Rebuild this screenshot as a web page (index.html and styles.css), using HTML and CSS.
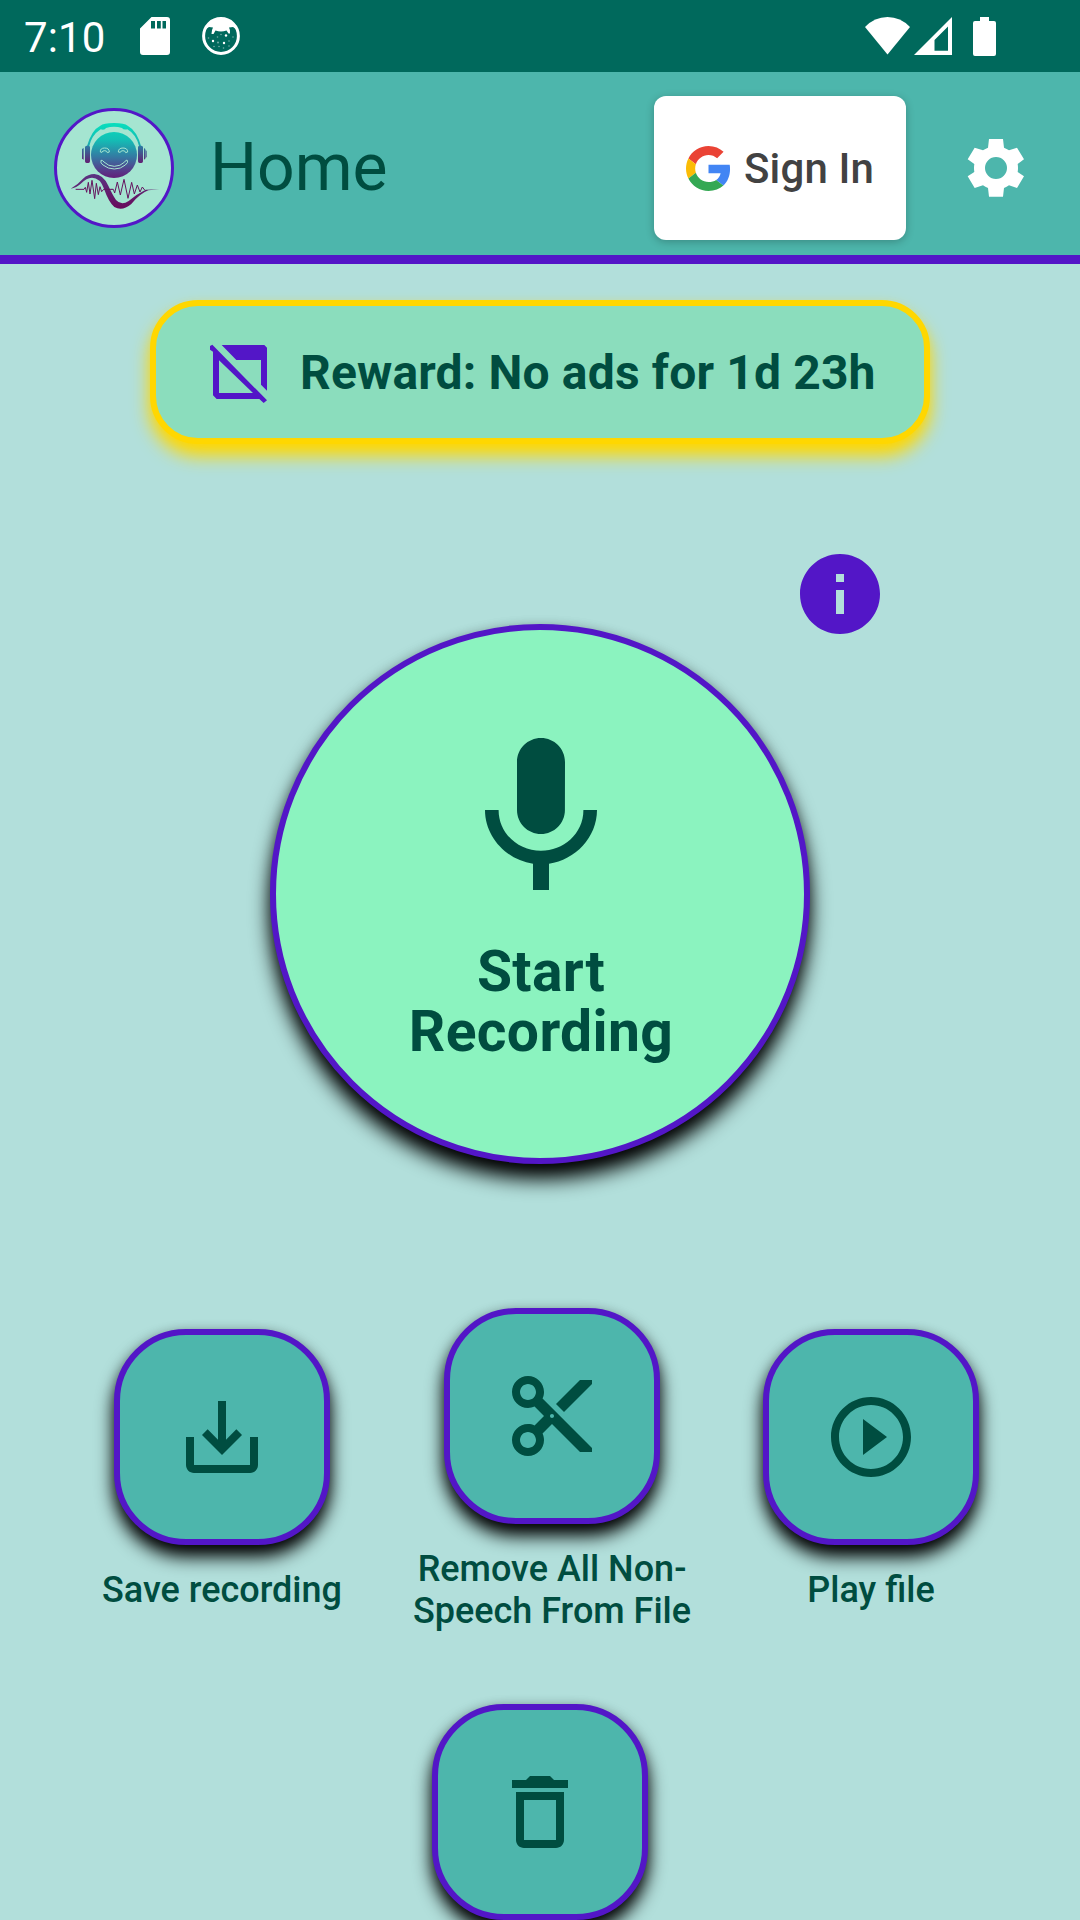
FILE: index.html
```html
<!DOCTYPE html>
<html lang="en">
<head>
<meta charset="utf-8">
<title>Home</title>
<link rel="stylesheet" href="styles.css">
</head>
<body>
<div class="screen">
  <div class="status-bar">
    <span class="clock">7:10</span>
    <svg class="sd-icon" viewBox="0 0 30 38"><path fill="#fff" fill-rule="evenodd" d="M11.500 0H27a3 3 0 0 1 3 3v32a3 3 0 0 1-3 3H3a3 3 0 0 1-3-3V11.500zM11 4v7.500h4V4zM17 4v7.500h3.800V4zM22.500 4v7.500H26V4z"/></svg>
    <svg class="app-icon" viewBox="0 0 38 38">
      <circle cx="19" cy="19" r="17.400" fill="none" stroke="#fff" stroke-width="3"/>
      <path fill="#fff" d="M4 12Q8 2 19 2T34 12L31 10L27 10.500Q28.500 13 28 16.500H26.500L24.500 13.500Q19 15.500 13.500 13.500L11.500 17H9.500Q9.500 13 11 10.500L7 10z"/>
      <g fill="#fff"><circle cx="11" cy="24" r="1.200"/><circle cx="22" cy="26" r="1.200"/><circle cx="24" cy="18.500" r="1.200"/></g>
      <g fill="#fff" opacity=".45"><circle cx="15.500" cy="20" r=".8"/><circle cx="19" cy="17.500" r=".8"/><circle cx="16" cy="25.500" r="1"/><circle cx="27" cy="24" r=".8"/><circle cx="12" cy="29.500" r=".8"/><circle cx="17" cy="29.500" r=".8"/><circle cx="21.500" cy="31" r=".8"/><circle cx="31" cy="20" r=".8"/><circle cx="27" cy="29" r=".8"/><circle cx="6.500" cy="21" r=".8"/></g>
    </svg>
    <div class="status-right">
      <svg class="wifi-icon" viewBox="0 0 45 38"><path fill="#fff" d="M22.500 37.500L0 10Q9.500 0 22.500 0T45 10z"/></svg>
      <svg class="signal-icon" viewBox="0 0 38 38"><path fill="#fff" fill-rule="evenodd" d="M38 0v38H0zM34 9.500L20.500 23v10.700H34z"/></svg>
      <svg class="battery-icon" viewBox="0 0 23 39"><path fill="#fff" d="M7 0h9v4h5a2 2 0 0 1 2 2v31a2 2 0 0 1-2 2H2a2 2 0 0 1-2-2V6a2 2 0 0 1 2-2h5z"/></svg>
    </div>
  </div>

  <header class="header">
    <svg class="logo" viewBox="42 39 360 360">
      <defs>
        <linearGradient id="face" x1="0" y1="84" x2="0" y2="250" gradientUnits="userSpaceOnUse">
          <stop offset="0" stop-color="#08dfbd"/><stop offset=".3" stop-color="#13bfb5"/><stop offset=".62" stop-color="#3578a2"/><stop offset=".85" stop-color="#553c8b"/><stop offset="1" stop-color="#631d78"/>
        </linearGradient>
        <linearGradient id="cups" x1="0" y1="150" x2="0" y2="206" gradientUnits="userSpaceOnUse">
          <stop offset="0" stop-color="#2a80a5"/><stop offset="1" stop-color="#641b70"/>
        </linearGradient>
        <linearGradient id="wave" x1="0" y1="235" x2="0" y2="342" gradientUnits="userSpaceOnUse">
          <stop offset="0" stop-color="#5a3583"/><stop offset="1" stop-color="#680a5b"/>
        </linearGradient>
      </defs>
      <circle cx="222" cy="219" r="175.500" fill="#a5e5d1" stroke="#5316c7" stroke-width="9"/>
      <path fill="url(#face)" d="M140 156Q154 105 181 92Q190 84 222 84T263 92Q291 107 304 156L298 156Q289 118 262 103Q250 105 246 99Q222 91 198 99Q195 106 182 103Q154 121 147 156z"/>
      <path fill="url(#cups)" d="M140 152h6q4 0 4 5v42q0 5-5 5h-5q-5 0-5-5v-42q0-5 5-5zM126 162l5-3v35l-5-3zM298 152h6q5 0 5 5v42q0 5-5 5h-5q-5 0-5-5v-42q0-5 4-5zM312 159l4 3v29l-4 3zM317 165l3 3v18l-3 3z"/>
      <circle cx="222" cy="180" r="69" fill="url(#face)"/>
      <g fill="none" stroke="#a5e5d1" stroke-width="3">
        <path d="M181 171q-1-12 13-12t14 12l-6 2q-1-6-8-6t-8 5zM235 171q0-12 14-12t14 12l-6 2q-1-6-8-6t-8 5z"/>
        <path d="M183 196q-3 8 6 14q15 12 34 12t33-12q10-8 6-14q-4-3-8 5q-13 13-31 13t-31-13q-5-7-9-5z"/>
      </g>
      <path fill="url(#wave)" d="M92 281Q112 270 129 251Q144 237 163 237Q190 239 205 272Q218 300 228 315Q244 333 266 318Q292 296 317 284L358 283L325 286Q299 296 274 327Q247 350 223 336Q206 321 192 281Q180 248 156 248Q139 249 124 265Q109 279 92 281z"/>
      <g fill="none" stroke="#65145f" stroke-width="3" stroke-linejoin="round">
        <path d="M107 283h25l4-6 4 15 5-30 5 35 6-41 8 55 5-46 6 34 5-24 5 15 6-7h26"/>
        <path d="M215 283h5l4 11 8-33 9 39 11-47 12 57 11-48 8 35 9-27 8 21 7-15 7 9"/>
      </g>
    </svg>
    <h1 class="title">Home</h1>
    <button class="sign-in">
      <svg class="google-icon" viewBox="0 0 48 48">
        <path fill="#ea4335" d="M24 9.500c3.540 0 6.710 1.220 9.210 3.600l6.850-6.850C35.900 2.380 30.470 0 24 0 14.620 0 6.510 5.380 2.560 13.220l7.980 6.190C12.430 13.720 17.740 9.500 24 9.500z"/>
        <path fill="#4285f4" d="M46.980 24.550c0-1.570-.15-3.090-.38-4.550H24v9.020h12.940c-.58 2.960-2.260 5.480-4.780 7.180l7.730 6c4.510-4.180 7.090-10.360 7.090-17.650z"/>
        <path fill="#fbbc05" d="M10.530 28.590c-.48-1.450-.76-2.990-.76-4.590s.27-3.140.76-4.590l-7.980-6.190C.92 16.460 0 20.120 0 24c0 3.880.92 7.540 2.560 10.780l7.970-6.190z"/>
        <path fill="#34a853" d="M24 48c6.480 0 11.930-2.130 15.890-5.810l-7.730-6c-2.150 1.450-4.920 2.300-8.160 2.300-6.260 0-11.570-4.220-13.470-9.910l-7.980 6.190C6.510 42.620 14.620 48 24 48z"/>
      </svg>
      <span>Sign In</span>
    </button>
    <svg class="gear" viewBox="0 0 216 228"><path fill="#fff" fill-rule="evenodd" d="M87 27H129L132 53Q140 56 147 61L171 53L192 88L173 102Q175 114 173 126L192 139L171 174L147 166Q140 171 132 174L129 200H87L84 174Q76 171 69 166L44 174L23 139L43 126Q41 114 43 102L23 88L44 53L69 61Q76 56 84 53zM108 81a33 33 0 1 0 0 66a33 33 0 1 0 0-66z"/></svg>
  </header>

  <main class="content">
    <div class="reward">
      <svg class="no-ads" viewBox="237 192 177 180">
        <path fill="#5316c7" d="M275 195H403L411 203V332L393 314V240H319zM240 198L247 194L411 361L401 369L388 357H260L249 346V215L240 209zM267 241V339H369z"/>
      </svg>
      <span>Reward: No ads for 1d 23h</span>
    </div>

    <svg class="info" viewBox="0 0 24 24"><path fill="#5316c7" d="M12 2C6.480 2 2 6.480 2 12s4.480 10 10 10 10-4.480 10-10S17.520 2 12 2zm1 15h-2v-6h2v6zm0-8h-2V7h2v2z"/></svg>

    <button class="record">
      <svg class="mic" viewBox="0 0 24 24"><path fill="#004d40" d="M12 14c1.660 0 2.990-1.340 2.990-3L15 5c0-1.660-1.340-3-3-3S9 3.340 9 5v6c0 1.660 1.340 3 3 3zm5.300-3c0 3-2.540 5.100-5.300 5.100S6.700 14 6.700 11H5c0 3.410 2.720 6.230 6 6.720V21h2v-3.280c3.280-.48 6-3.300 6-6.720h-1.700z"/></svg>
      <span class="record-label">Start<br>Recording</span>
    </button>

    <div class="actions">
      <div class="action">
        <button class="tile"><svg class="icon" viewBox="0 0 24 24"><path d="M19 12v7H5v-7H3v7c0 1.100.9 2 2 2h14c1.100 0 2-.9 2-2v-7h-2zm-6 .67l2.590-2.580L17 11.500l-5 5-5-5 1.410-1.410L11 12.670V3h2z"/></svg></button>
        <span class="label">Save recording</span>
      </div>
      <div class="action">
        <button class="tile"><svg class="icon" viewBox="0 0 24 24"><path d="M9.640 7.640c.23-.5.360-1.050.360-1.640 0-2.210-1.790-4-4-4S2 3.790 2 6s1.790 4 4 4c.59 0 1.140-.13 1.640-.36L10 12l-2.360 2.360C7.140 14.130 6.590 14 6 14c-2.210 0-4 1.790-4 4s1.790 4 4 4 4-1.790 4-4c0-.59-.13-1.140-.36-1.640L12 14l7 7h3v-1L9.640 7.640zM6 8c-1.100 0-2-.89-2-2s.9-2 2-2 2 .89 2 2-.9 2-2 2zm0 12c-1.100 0-2-.89-2-2s.9-2 2-2 2 .89 2 2-.9 2-2 2zm6-7.500c-.28 0-.5-.22-.5-.5s.22-.5.500-.5.500.22.500.500-.22.500-.5.500zM19 3l-6 6 2 2 7-7V3z"/></svg></button>
        <span class="label">Remove All Non-<br>Speech From File</span>
      </div>
      <div class="action">
        <button class="tile"><svg class="icon" viewBox="0 0 24 24"><path d="M10 16.500l6-4.500-6-4.500v9zM12 2C6.480 2 2 6.480 2 12s4.480 10 10 10 10-4.480 10-10S17.520 2 12 2zm0 18c-4.410 0-8-3.590-8-8s3.590-8 8-8 8 3.590 8 8-3.590 8-8 8z"/></svg></button>
        <span class="label">Play file</span>
      </div>
    </div>

    <button class="tile delete"><svg class="icon" viewBox="0 0 24 24"><path fill-rule="evenodd" d="M6 19c0 1.100.9 2 2 2h8c1.100 0 2-.9 2-2V7H6v12zM8 9h8v10H8V9zm7.500-5l-1-1h-5l-1 1H5v2h14V4h-3.500z"/></svg></button>
  </main>
</div>
</body>
</html>
```
FILE: styles.css
```css
* { box-sizing: border-box; }

body {
  margin: 0;
  background: #b2dfdb;
  font-family: Roboto, "Noto Sans", sans-serif;
  color: #004d40;
}

button {
  margin: 0;
  padding: 0;
  font: inherit;
  color: inherit;
}

svg { display: block; flex: none; }

.screen {
  width: 1080px;
  height: 1920px;
  overflow: hidden;
  display: flex;
  flex-direction: column;
}

.status-bar {
  flex: none;
  height: 72px;
  background: #00695c;
  color: #fff;
  display: flex;
  align-items: center;
  padding: 0 84px 0 24px;
}
.clock { width: 116px; font-size: 42px; line-height: 48px; padding-top: 3px; letter-spacing: 0.1px; }
.sd-icon { width: 30px; height: 38px; }
.app-icon { width: 38px; height: 38px; margin-left: 32px; }
.status-right { margin-left: auto; display: flex; align-items: center; }
.wifi-icon { width: 45px; height: 38px; }
.signal-icon { width: 38px; height: 38px; margin-left: 4px; }
.battery-icon { width: 23px; height: 39px; margin-left: 21px; }

.header {
  flex: none;
  height: 192px;
  background: #4db6ac;
  border-bottom: 9px solid #5316c7;
  display: flex;
  align-items: center;
  padding: 9px 48px 0 54px;
}
.logo { width: 120px; height: 120px; }
.title { margin: 0 0 0 36px; font-size: 66px; font-weight: 400; line-height: 78px; }
.sign-in {
  width: 252px;
  height: 144px;
  margin-left: auto;
  border: 0;
  border-radius: 12px;
  background: #fff;
  box-shadow: 0 2px 8px rgba(0, 0, 0, 0.24);
  display: flex;
  align-items: center;
  padding-left: 32px;
  gap: 13px;
  color: #424242;
  font-size: 42px;
  font-weight: 500;
  letter-spacing: 0.15px;
}
.google-icon { width: 45px; height: 45px; }
.gear { width: 72px; height: 76px; margin-left: 54px; }

.content {
  flex: 1;
  display: flex;
  flex-direction: column;
  align-items: center;
}

.reward {
  flex: none;
  width: 780px;
  height: 144px;
  margin-top: 36px;
  border: 6px solid #ffd700;
  border-radius: 48px;
  background: #8bddbd;
  box-shadow: 0 12px 18px #ffd700, 0 3px 9px rgba(255, 215, 0, 0.2);
  display: flex;
  align-items: center;
  padding-left: 53px;
  gap: 32px;
  font-size: 48px;
  font-weight: 700;
  letter-spacing: 0.16px;
  white-space: nowrap;
}
.no-ads { width: 59px; height: 60px; margin-top: 3px; }

.info {
  width: 96px;
  height: 96px;
  align-self: flex-end;
  margin: 102px 192px 0 0;
}

.record {
  flex: none;
  width: 540px;
  height: 540px;
  margin-top: -18px;
  border: 6px solid #5316c7;
  border-radius: 50%;
  background: #8bf3bf;
  box-shadow: 0 15px 20px #000, 0 3px 12px rgba(0, 0, 0, 0.25);
  display: flex;
  flex-direction: column;
  align-items: center;
  padding: 92px 0 0 2px;
}
.mic { width: 192px; height: 192px; }
.record-label {
  margin-top: 28px;
  font-size: 57px;
  font-weight: 700;
  line-height: 60px;
  letter-spacing: 0.35px;
  text-align: center;
}

.actions {
  flex: none;
  align-self: stretch;
  margin-top: 144px;
  padding-left: 57px;
  display: grid;
  grid-template-columns: 330px 330px 308px;
  align-items: center;
}
.action { display: flex; flex-direction: column; align-items: center; }
.tile {
  flex: none;
  width: 216px;
  height: 216px;
  border: 6px solid #5316c7;
  border-radius: 72px;
  background: #4db6ac;
  box-shadow: 0 12px 18px #000, 0 3px 12px rgba(0, 0, 0, 0.25);
  display: flex;
  align-items: center;
  justify-content: center;
}
.icon { width: 96px; height: 96px; fill: #004d40; }
.label {
  margin-top: 24px;
  font-size: 36px;
  font-weight: 500;
  line-height: 42px;
  text-align: center;
  white-space: nowrap;
}
.delete { margin-top: 72px; }
```
